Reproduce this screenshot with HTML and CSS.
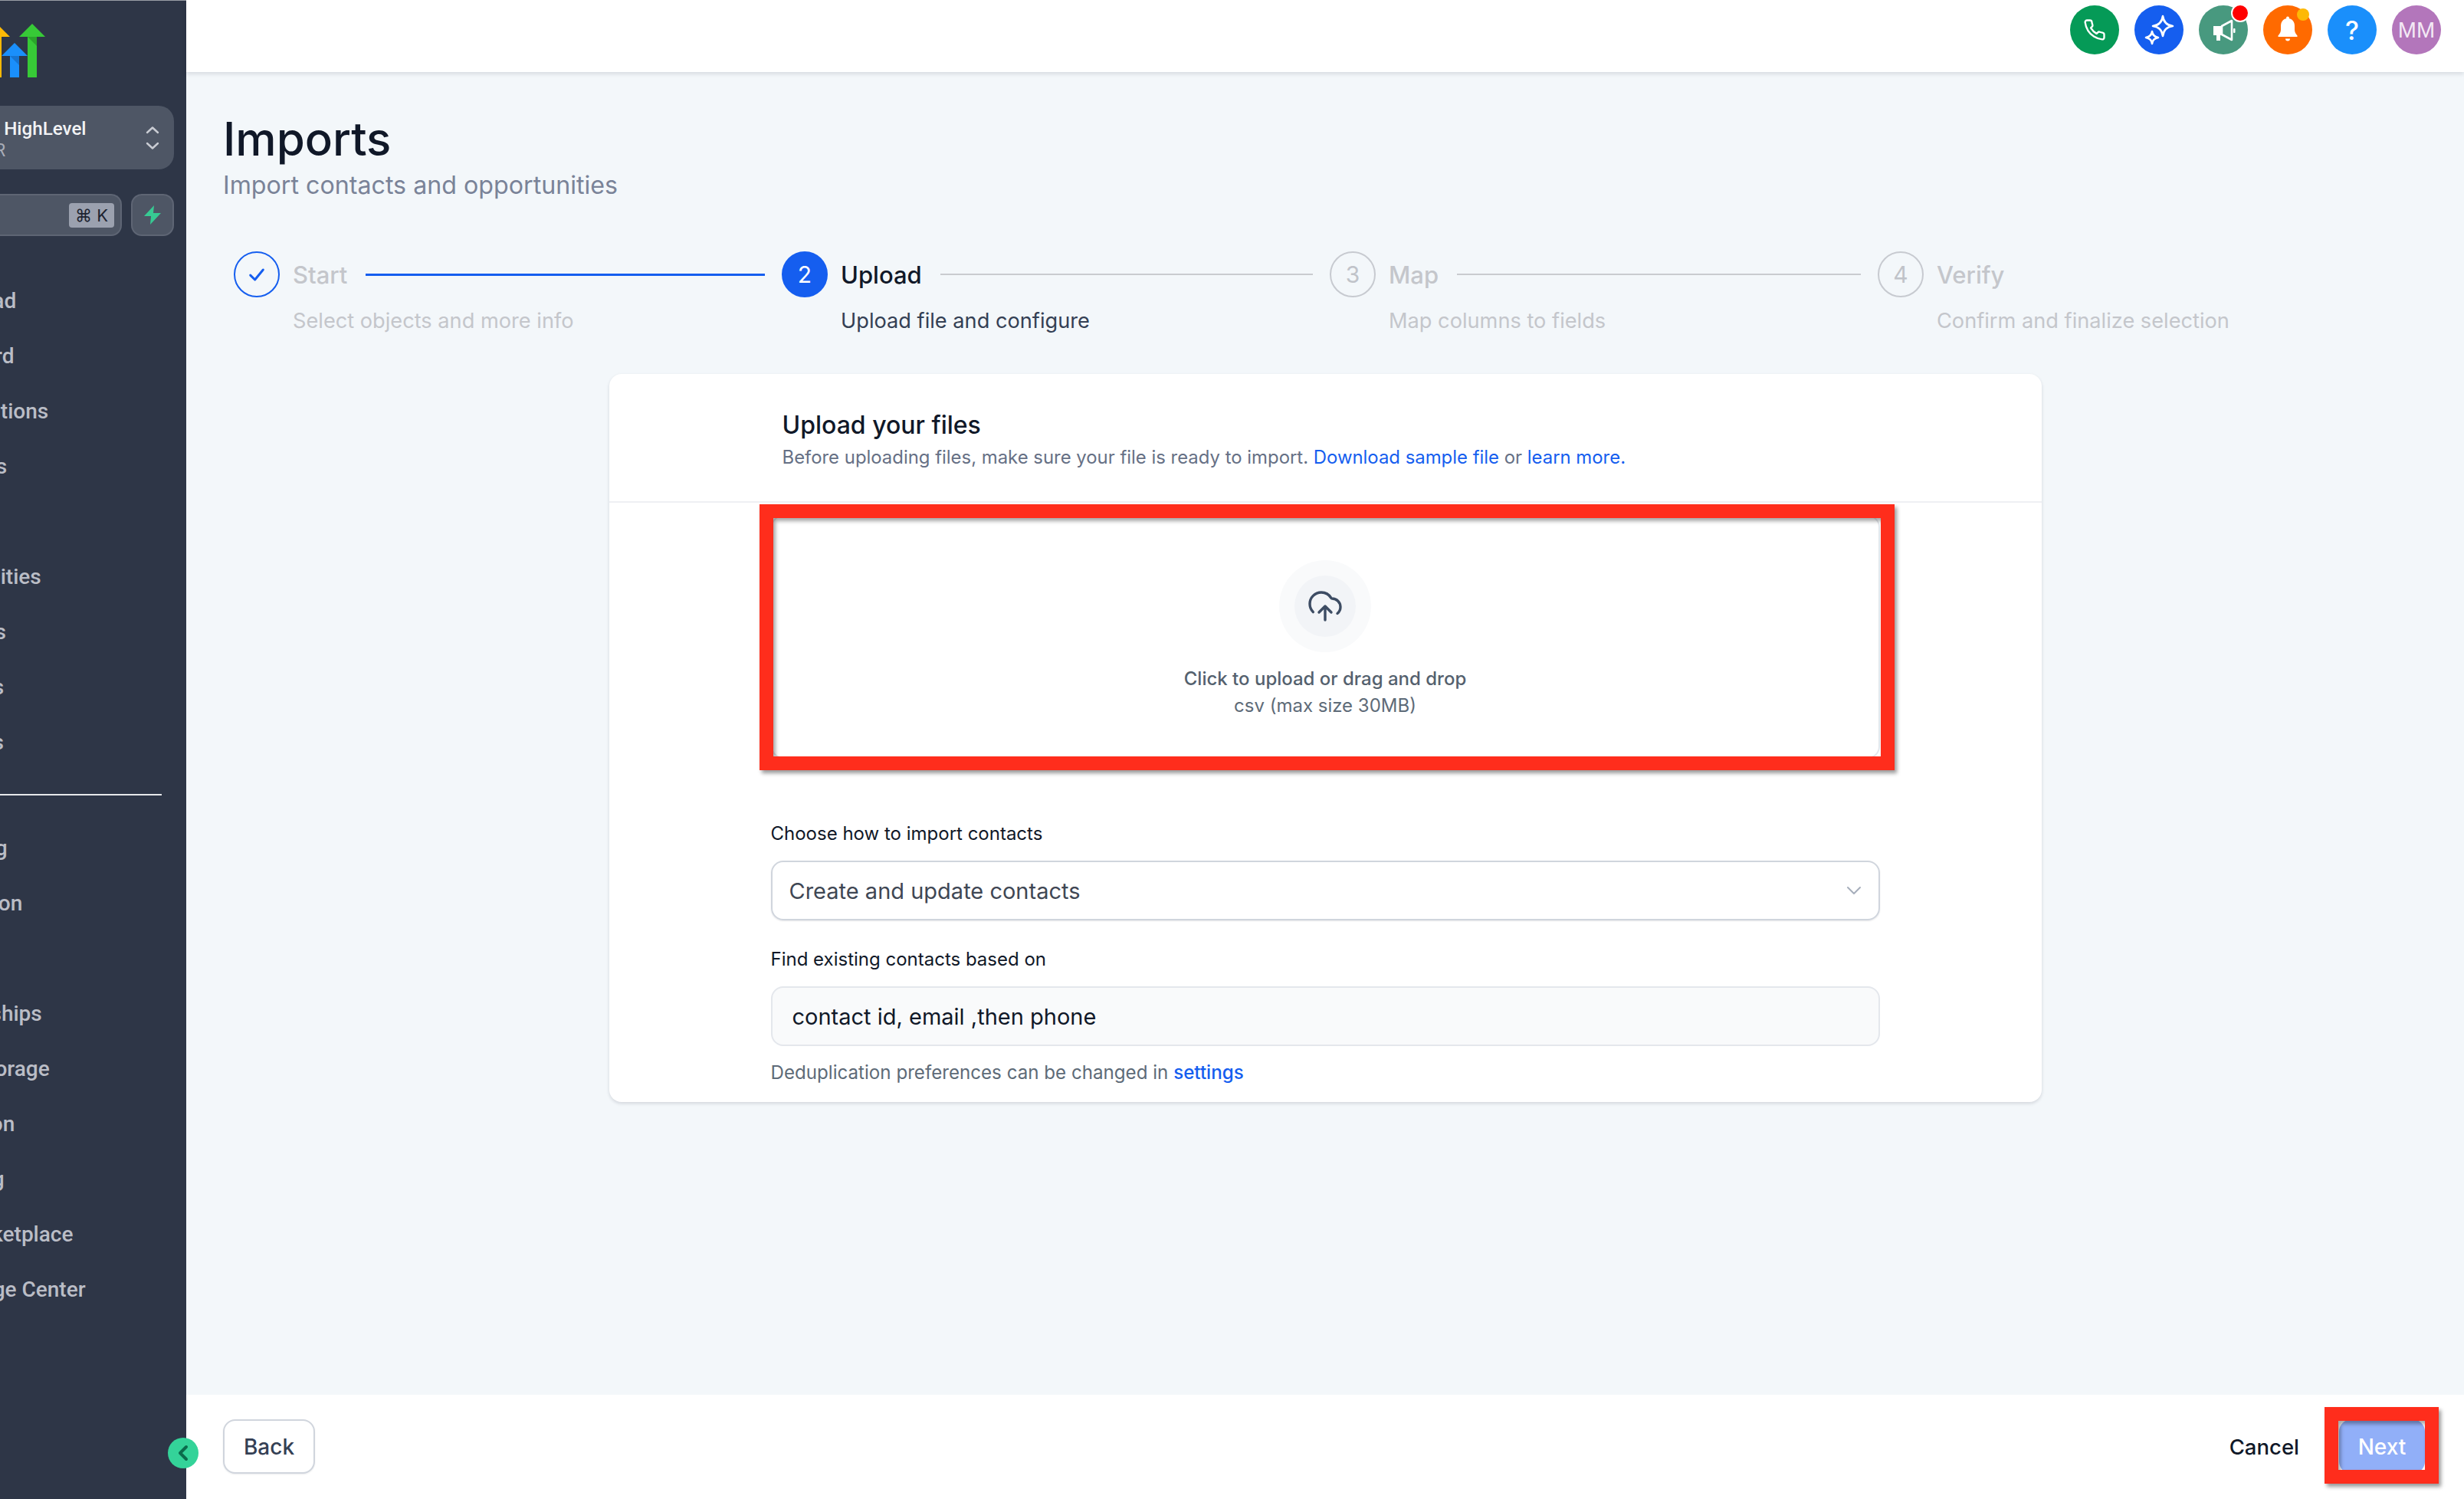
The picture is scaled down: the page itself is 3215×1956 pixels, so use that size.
FILE: index.html
```html
<!DOCTYPE html>
<html lang="en">
<head>
    <meta charset="UTF-8">
    <meta name="viewport" content="width=device-width, initial-scale=1.0">
    <title>Imports</title>
    <link rel="stylesheet" href="styles.css">
</head>
<body>
    <div class="app">
        <aside class="sidebar">
            <svg class="logo" width="60" height="72" viewBox="0 0 60 72">
                <path d="M-4 0L13 17H2V70H-10V17H-21Z" fill="#fdb906"/>
                <path d="M19 25L36 42H25V70H13V42H2Z" fill="#1a8ffb"/>
                <path d="M13 42H25V54Z" fill="#1674d1"/>
                <path d="M42 0L59 17H48V70H36V17H25Z" fill="#37ca37"/>
                <path d="M36 17H48V29Z" fill="#2aa52a"/>
            </svg>

            <div class="switcher">
                <div class="switcher-text">
                    <div class="switcher-name">Go HighLevel</div>
                    <div class="switcher-sub">R</div>
                </div>
                <svg width="18" height="32" viewBox="0 0 18 32" fill="none" stroke="#c9ccd3" stroke-width="2.4" stroke-linecap="round" stroke-linejoin="round">
                    <path d="M2 9L9 2.5L16 9"/>
                    <path d="M2 23L9 29.500L16 23"/>
                </svg>
            </div>

            <div class="search-row">
                <div class="search-box"><span class="kbd">⌘ K</span></div>
                <div class="bolt-btn">
                    <svg width="22" height="25" viewBox="0 0 22 25"><path d="M13 0L0 14H9L8 25L22 10H12Z" fill="#37ca93"/></svg>
                </div>
            </div>

            <nav class="nav">
                <a class="nav-item">Launchpad</a>
                <a class="nav-item">Dashboard</a>
                <a class="nav-item">Conversations</a>
                <a class="nav-item">Calendars</a>
                <a class="nav-item">Contacts</a>
                <a class="nav-item">Opportunities</a>
                <a class="nav-item">Payments</a>
                <a class="nav-item">AI Agents</a>
                <a class="nav-item">Contracts</a>
            </nav>
            <div class="nav-divider"></div>
            <nav class="nav">
                <a class="nav-item">Marketing</a>
                <a class="nav-item">Automation</a>
                <a class="nav-item">Sites</a>
                <a class="nav-item">Memberships</a>
                <a class="nav-item">Media Storage</a>
                <a class="nav-item">Reputation</a>
                <a class="nav-item">Reporting</a>
                <a class="nav-item">App Marketplace</a>
                <a class="nav-item">Knowledge Center</a>
            </nav>
        </aside>

        <div class="collapse-btn">
            <svg width="14" height="22" viewBox="0 0 14 22" fill="none" stroke="#0b6b4c" stroke-width="4" stroke-linecap="round" stroke-linejoin="round"><path d="M11 3L3 11L11 19"/></svg>
        </div>

        <div class="main">
            <header class="topbar">
                <div class="round-icon icon-phone">
                    <svg width="30" height="30" viewBox="0 0 24 24" fill="none" stroke="#fff" stroke-width="1.9" stroke-linecap="round" stroke-linejoin="round"><path d="M22 16.92v3a2 2 0 0 1-2.18 2 19.79 19.79 0 0 1-8.63-3.07 19.5 19.5 0 0 1-6-6 19.79 19.79 0 0 1-3.07-8.67A2 2 0 0 1 4.11 2h3a2 2 0 0 1 2 1.72 12.84 12.84 0 0 0 .7 2.81 2 2 0 0 1-.45 2.11L8.09 9.91a16 16 0 0 0 6 6l1.27-1.27a2 2 0 0 1 2.11-.45 12.84 12.84 0 0 0 2.81.7A2 2 0 0 1 22 16.92z"/></svg>
                </div>
                <div class="round-icon icon-spark">
                    <svg width="40" height="40" viewBox="0 0 40 40" fill="none" stroke="#fff" stroke-width="2.6" stroke-linejoin="round"><path d="M25 2C26 10 30 14 38 15C30 16 26 20 25 28C24 20 20 16 12 15C20 14 24 10 25 2Z"/><path d="M11 22C11.500 26.500 14 29 19 30C14 31 11.500 33.500 11 38C10.500 33.500 8 31 3 30C8 29 10.500 26.500 11 22Z"/></svg>
                </div>
                <div class="round-icon icon-mega">
                    <svg width="40" height="40" viewBox="0 0 40 40" fill="none"><path d="M7 15H17V27H16V34H11V27H7Z" fill="#fff"/><path d="M18 15L31 8V33L18 26Z" stroke="#fff" stroke-width="2.6" stroke-linejoin="round"/><rect x="33" y="18" width="2.500" height="6" rx="1" fill="#fff"/></svg>
                    <span class="dot dot-red"></span>
                </div>
                <div class="round-icon icon-bell">
                    <svg width="40" height="40" viewBox="0 0 40 40" fill="#fff"><circle cx="20" cy="4.500" r="2"/><path d="M20 5c-6 0-9 4.500-9 10v5c0 3-1.500 5-3.500 7.500v1.500h25v-1.500c-2-2.500-3.500-4.500-3.500-7.500v-5c0-5.500-3-10-9-10z"/><path d="M17 31.500h6a3 3 0 0 1-6 0z"/></svg>
                    <span class="dot dot-yellow"></span>
                </div>
                <div class="round-icon icon-help">?</div>
                <div class="round-icon icon-user">MM</div>
            </header>

            <main class="content">
                <h1 class="page-title">Imports</h1>
                <p class="page-sub">Import contacts and opportunities</p>

                <div class="stepper">
                    <div class="step step-done">
                        <div class="step-head">
                            <span class="step-circle">
                                <svg width="24" height="19" viewBox="0 0 20 16" fill="none" stroke="#155eef" stroke-width="2.5" stroke-linecap="round" stroke-linejoin="round"><path d="M3 8.500L8 13.500L17 2.500"/></svg>
                            </span>
                            <span class="step-title">Start</span>
                            <span class="step-line"></span>
                        </div>
                        <div class="step-desc">Select objects and more info</div>
                    </div>
                    <div class="step step-active">
                        <div class="step-head">
                            <span class="step-circle">2</span>
                            <span class="step-title">Upload</span>
                            <span class="step-line"></span>
                        </div>
                        <div class="step-desc">Upload file and configure</div>
                    </div>
                    <div class="step">
                        <div class="step-head">
                            <span class="step-circle">3</span>
                            <span class="step-title">Map</span>
                            <span class="step-line"></span>
                        </div>
                        <div class="step-desc">Map columns to fields</div>
                    </div>
                    <div class="step">
                        <div class="step-head">
                            <span class="step-circle">4</span>
                            <span class="step-title">Verify</span>
                        </div>
                        <div class="step-desc">Confirm and finalize selection</div>
                    </div>
                </div>

                <section class="card">
                    <div class="card-header">
                        <h2 class="card-title">Upload your files</h2>
                        <p class="card-sub">Before uploading files, make sure your file is ready to import. <a class="link">Download sample file</a> or <a class="link">learn more.</a></p>
                    </div>
                    <div class="card-body">
                        <div class="dropzone">
                            <div class="upload-ring">
                                <div class="upload-ring-inner">
                                    <svg width="48" height="48" viewBox="0 0 24 24" fill="none" stroke="#3d4c63" stroke-width="1.7" stroke-linecap="round" stroke-linejoin="round"><path d="M8 16L12 12M12 12L16 16M12 12V21M20 16.7428C21.2215 15.734 22 14.2079 22 12.5C22 9.46243 19.5376 7 16.5 7C16.2815 7 16.0771 6.886 15.9661 6.69774C14.6621 4.48484 12.2544 3 9.5 3C5.35786 3 2 6.35786 2 10.5C2 12.5661 2.83545 14.4371 4.18695 15.7935"/></svg>
                                </div>
                            </div>
                            <div class="drop-text">Click to upload or drag and drop</div>
                            <div class="drop-hint">csv (max size 30MB)</div>
                        </div>

                        <label class="field-label first">Choose how to import contacts</label>
                        <div class="field select-field">
                            <span>Create and update contacts</span>
                            <svg width="20" height="12" viewBox="0 0 20 12" fill="none" stroke="#a6aebb" stroke-width="2" stroke-linecap="round" stroke-linejoin="round"><path d="M2 2L10 10L18 2"/></svg>
                        </div>

                        <label class="field-label">Find existing contacts based on</label>
                        <div class="field input-field">contact id, email ,then phone</div>
                        <p class="field-note">Deduplication preferences can be changed in <a class="link">settings</a></p>
                    </div>
                    <div class="red-box upload-mark"></div>
                </section>
            </main>

            <footer class="footer">
                <button class="btn-back">Back</button>
                <div class="footer-right">
                    <span class="cancel">Cancel</span>
                    <div class="next-wrap">
                        <button class="btn-next">Next</button>
                        <div class="red-box next-mark"></div>
                    </div>
                </div>
            </footer>
        </div>
    </div>
</body>
</html>
```

FILE: styles.css
```css
* {
    box-sizing: border-box;
}
body {
    margin: 0;
    font-family: Inter, "Liberation Sans", sans-serif;
    background-color: #f3f7fa;
    color: #101828;
}
p, h1, h2 {
    margin: 0;
}
.app {
    display: flex;
    height: 1956px;
    overflow: hidden;
    position: relative;
}

/* sidebar */
.sidebar {
    width: 243px;
    flex-shrink: 0;
    background-color: #2e3647;
    border-top: 1px solid #9a9ea6;
    overflow: hidden;
}
.logo {
    display: block;
    margin-top: 30px;
    overflow: visible;
}
.switcher {
    width: 227px;
    height: 83px;
    margin-top: 35px;
    background-color: #4e5665;
    border-radius: 0 20px 20px 0;
    display: flex;
    align-items: center;
    justify-content: space-between;
    padding-right: 19px;
}
.switcher-text {
    margin-left: -31px;
}
.switcher-name {
    color: #f2f3f5;
    font-family: Roboto, sans-serif;
    font-weight: 500;
    font-size: 24.200px;
    line-height: 30px;
    white-space: nowrap;
    margin-top: 4px;
}
.switcher-sub {
    color: #a9adb7;
    font-family: Roboto, sans-serif;
    font-size: 23px;
    line-height: 28px;
    margin-left: 24px;
}
.search-row {
    display: flex;
    gap: 12px;
    margin-top: 32px;
    width: 227px;
}
.search-box {
    width: 159px;
    height: 55px;
    background-color: #4e5665;
    border: 2px solid #5e6574;
    border-left: none;
    border-radius: 0 14px 14px 0;
    display: flex;
    align-items: center;
    justify-content: flex-end;
    padding-right: 8px;
}
.kbd {
    width: 59px;
    height: 32px;
    background-color: #9ba1af;
    border-radius: 4px;
    color: #1d2330;
    font-size: 22px;
    line-height: 32px;
    text-align: center;
}
.bolt-btn {
    width: 56px;
    height: 55px;
    background-color: #4e5665;
    border: 2px solid #5e6574;
    border-radius: 14px;
    display: flex;
    align-items: center;
    justify-content: center;
}
.nav {
    margin-left: -117px;
}
.sidebar .search-row + .nav {
    margin-top: 49px;
}
.nav-item {
    display: block;
    height: 72px;
    line-height: 72px;
    color: #babdc6;
    font-family: Roboto, sans-serif;
    font-weight: 500;
    font-size: 28px;
    white-space: nowrap;
}
.nav-divider {
    width: 211px;
    height: 2px;
    background-color: #e6e8eb;
    margin: 31px 0 33px;
}
.collapse-btn {
    position: absolute;
    left: 219px;
    top: 1876px;
    width: 40px;
    height: 40px;
    border-radius: 50%;
    background-color: #34d399;
    display: flex;
    align-items: center;
    justify-content: center;
}

/* top bar */
.main {
    flex: 1;
    display: flex;
    flex-direction: column;
    min-width: 0;
}
.topbar {
    height: 94px;
    flex-shrink: 0;
    background-color: #fff;
    box-shadow: 0 2px 6px rgba(16,24,40,0.14);
    display: flex;
    justify-content: flex-end;
    gap: 20px;
    padding: 7px 30px 0 0;
    position: relative;
}
.round-icon {
    width: 64px;
    height: 64px;
    border-radius: 50%;
    display: flex;
    align-items: center;
    justify-content: center;
    color: #fff;
    position: relative;
}
.icon-phone { background-color: #059a57; }
.icon-spark { background-color: #155eef; }
.icon-mega { background-color: #48997f; }
.icon-bell { background-color: #ff6a00; }
.icon-help {
    background-color: #1a8ffb;
    font-size: 34px;
    font-weight: 500;
}
.icon-user {
    background-color: #b376bb;
    font-size: 29px;
    color: #f4e9f5;
    font-family: "Liberation Sans", sans-serif;
}
.dot {
    position: absolute;
    border-radius: 50%;
}
.dot-red {
    width: 24px;
    height: 24px;
    right: -2px;
    top: -2px;
    background-color: #f00;
    border: 2px solid #fff;
}
.dot-yellow {
    width: 16px;
    height: 16px;
    right: 4px;
    top: 4px;
    background-color: #fdb906;
}

/* page */
.content {
    flex: 1;
    padding: 51px 0 0 48px;
    min-height: 0;
}
.page-title {
    font-size: 60px;
    font-weight: 500;
    line-height: 72px;
    color: #101828;
}
.page-sub {
    font-size: 32.200px;
    line-height: 40px;
    margin-top: 5px;
    color: #7a8398;
}
.stepper {
    display: grid;
    grid-template-columns: 715px 715px 715px auto;
    margin: 66px 0 0 14px;
}
.step-head {
    display: flex;
    align-items: center;
    height: 60px;
    padding-right: 22px;
}
.step-circle {
    width: 60px;
    height: 60px;
    flex-shrink: 0;
    border-radius: 50%;
    border: 2px solid #c7cad0;
    color: #c0c3c9;
    font-size: 30px;
    display: flex;
    align-items: center;
    justify-content: center;
    margin-right: 17px;
}
.step-title {
    font-size: 31px;
    font-weight: 500;
    color: #c4c6cb;
}
.step-line {
    flex: 1;
    height: 2px;
    margin-left: 24px;
    background-color: #c9cbcf;
}
.step-desc {
    font-size: 27.200px;
    line-height: 36px;
    margin: 13px 0 0 77px;
    color: #c4c6cb;
    white-space: nowrap;
}
.step-done .step-circle {
    border-color: #155eef;
}
.step-done .step-line {
    background-color: #155eef;
    height: 3px;
}
.step-active .step-circle {
    background-color: #155eef;
    border-color: #155eef;
    color: #fff;
}
.step-active .step-title {
    color: #101828;
}
.step-active .step-desc {
    color: #344054;
}

/* card */
.card {
    width: 1869px;
    margin: 51px auto 0;
    position: relative;
    left: -24px;
    background-color: #fff;
    border-radius: 16px;
    box-shadow: 0 2px 4px rgba(16,24,40,0.14);
}
.card-header {
    height: 168px;
    padding: 48px 0 0 226px;
    border-bottom: 2px solid #eef0f3;
}
.card-title {
    font-size: 32px;
    font-weight: 500;
    line-height: 38px;
}
.card-sub {
    font-size: 23.900px;
    line-height: 36px;
    margin-top: 5px;
    color: #667085;
}
.link {
    color: #155eef;
}
.card-body {
    padding: 16px 211px 21px;
}
.dropzone {
    height: 318px;
    padding-top: 57px;
    border: 2px solid #e4e7ec;
    border-radius: 16px;
    text-align: center;
}
.upload-ring {
    width: 120px;
    height: 120px;
    margin: 0 auto;
    border-radius: 50%;
    background-color: #f9fafb;
    display: flex;
    align-items: center;
    justify-content: center;
}
.upload-ring-inner {
    width: 80px;
    height: 80px;
    border-radius: 50%;
    background-color: #f2f4f7;
    display: flex;
    align-items: center;
    justify-content: center;
}
.drop-text {
    margin-top: 16px;
    font-size: 24px;
    font-weight: 500;
    line-height: 37px;
    color: #54616e;
}
.drop-hint {
    font-size: 24px;
    line-height: 34px;
    color: #5e6b78;
}
.field-label {
    display: block;
    font-size: 24px;
    line-height: 32px;
    margin: 35px 0 19px;
    color: #101828;
}
.field-label.first {
    margin-top: 82px;
}
.field {
    height: 78px;
    border-radius: 16px;
    display: flex;
    align-items: center;
}
.select-field {
    border: 2px solid #d0d5dd;
    box-shadow: 0 1px 2px rgba(16,24,40,0.1);
    padding: 0 22px 0 22px;
    justify-content: space-between;
    color: #3f4754;
    font-size: 29px;
}
.input-field {
    border: 2px solid #e4e7ec;
    background-color: #f9fafb;
    padding-left: 26px;
    color: #101828;
    font-size: 29px;
}
.field-note {
    font-size: 24.150px;
    line-height: 34px;
    margin-top: 18px;
    color: #5e6b78;
}
.field-note .link {
    font-weight: 500;
}

/* red annotation boxes on top of the screenshot */
.red-box {
    position: absolute;
    border: 18px solid #ff2d1c;
    box-shadow: 3px 4px 5px rgba(0,0,0,0.4), inset 3px 4px 5px rgba(0,0,0,0.35);
}
.upload-mark {
    left: 196px;
    top: 170px;
    width: 1481px;
    height: 347px;
}
.next-mark {
    left: -19px;
    top: -16px;
    width: 149px;
    height: 100px;
}

/* footer */
.footer {
    height: 136px;
    flex-shrink: 0;
    background-color: #fff;
    display: flex;
    justify-content: space-between;
    align-items: flex-start;
    padding: 32px 51px 0 48px;
}
button {
    font-family: inherit;
    font-size: 28px;
    cursor: pointer;
}
.btn-back {
    width: 120px;
    height: 71px;
    background-color: #fff;
    border: 2px solid #d0d5dd;
    border-radius: 16px;
    box-shadow: 0 1px 2px rgba(16,24,40,0.08);
    color: #344054;
    font-weight: 500;
}
.footer-right {
    display: flex;
    align-items: center;
    gap: 52px;
    height: 71px;
}
.cancel {
    font-size: 27.500px;
    font-weight: 500;
    color: #101828;
}
.next-wrap {
    position: relative;
}
.btn-next {
    display: block;
    width: 112px;
    height: 71px;
    background-color: #91aff8;
    border: none;
    border-radius: 16px;
    color: #fff;
    font-weight: 500;
}
```
